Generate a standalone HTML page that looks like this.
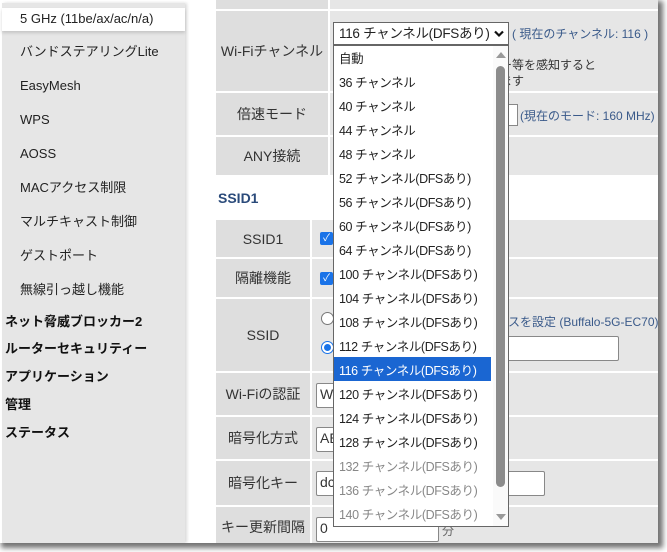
<!DOCTYPE html>
<html><head><meta charset="utf-8"><style>
*{margin:0;padding:0;box-sizing:border-box}
body{width:667px;height:552px;background:#fff;position:relative;overflow:hidden;font-family:"Liberation Sans","Noto Sans CJK JP",sans-serif;font-size:13px;color:#333}
.a{position:absolute}
#frame{left:0;top:0;width:658px;height:543px;background:#fff;box-shadow:3px 3px 5px 2px rgba(0,0,0,.55);overflow:hidden}
#side{left:2px;top:3px;width:183px;height:540px;background:#e6e6e6;box-shadow:2px 0 3px rgba(0,0,0,.15)}
.si{position:absolute;left:18px;font-size:13px;line-height:20px;color:#222;white-space:nowrap}
.sb{position:absolute;left:3px;font-size:13px;line-height:20px;font-weight:bold;color:#111;white-space:nowrap}
.l{position:absolute;background:#dedede;display:flex;align-items:center;justify-content:center;font-size:14px;color:#333}
.v{position:absolute;background:#e6e6e6}
.opt{position:absolute;left:1px;width:156px;height:24px;line-height:24px;padding-left:4px;font-size:12.5px;letter-spacing:-0.4px;color:#222;white-space:nowrap}
.cb{position:absolute;width:13px;height:13px;background:#1a73e8;border-radius:2px;color:#fff;font-size:10px;line-height:13px;text-align:center}
.inp{position:absolute;background:#fff;border:1px solid #888;border-radius:2px;font-size:14px;padding-left:3px;line-height:21px}
</style></head><body>
<div id="frame" class="a">
<div id="side" class="a">
 <div class="a" style="left:0;top:5px;width:183px;height:23px;background:#fff;box-shadow:0 2px 3px rgba(0,0,0,.15)"></div>
 <div class="si" style="top:6px">5 GHz (11be/ax/ac/n/a)</div>
 <div class="si" style="top:39px">バンドステアリングLite</div>
 <div class="si" style="top:73px">EasyMesh</div>
 <div class="si" style="top:107px">WPS</div>
 <div class="si" style="top:141px">AOSS</div>
 <div class="si" style="top:175px">MACアクセス制限</div>
 <div class="si" style="top:209px">マルチキャスト制御</div>
 <div class="si" style="top:243px">ゲストポート</div>
 <div class="si" style="top:277px">無線引っ越し機能</div>
 <div class="sb" style="top:309px">ネット脅威ブロッカー2</div>
 <div class="sb" style="top:336px">ルーターセキュリティー</div>
 <div class="sb" style="top:364px">アプリケーション</div>
 <div class="sb" style="top:392px">管理</div>
 <div class="sb" style="top:420px">ステータス</div>
</div>

<div class="l" style="left:216px;top:0;width:112px;height:9px"></div>
<div class="v" style="left:330px;top:0;width:330px;height:9px"></div>
<div class="l" style="left:216px;top:11px;width:112px;height:80px">Wi-Fiチャンネル</div>
<div class="v" style="left:330px;top:11px;width:330px;height:80px"></div>
<div class="l" style="left:216px;top:93px;width:112px;height:42px">倍速モード</div>
<div class="v" style="left:330px;top:93px;width:330px;height:42px"></div>
<div class="l" style="left:216px;top:137px;width:112px;height:38px">ANY接続</div>
<div class="v" style="left:330px;top:137px;width:330px;height:38px"></div>

<div class="a" style="left:512px;top:25px;font-size:12px;color:#3a5a8a">( 現在のチャンネル:  116 )</div>
<div class="a" style="left:500px;top:56px;font-size:12px;color:#333">ー等を感知すると</div>
<div class="a" style="left:500px;top:72px;font-size:12px;color:#333">ます</div>
<div class="a" style="left:498px;top:104px;width:20px;height:22px;background:#fff;border:1px solid #888;border-left:none;font-size:10px;line-height:20px">✔</div>
<div class="a" style="left:520px;top:107px;font-size:12px;color:#3a5a8a">(現在のモード: 160 MHz)</div>

<div class="a" style="left:218px;top:190px;font-size:14px;font-weight:bold;color:#2a4a7a">SSID1</div>

<div class="l" style="left:216px;top:220px;width:94px;height:37px">SSID1</div>
<div class="v" style="left:312px;top:220px;width:348px;height:37px"></div>
<div class="l" style="left:216px;top:259px;width:94px;height:38px">隔離機能</div>
<div class="v" style="left:312px;top:259px;width:348px;height:38px"></div>
<div class="l" style="left:216px;top:299px;width:94px;height:72px">SSID</div>
<div class="v" style="left:312px;top:299px;width:348px;height:72px"></div>
<div class="l" style="left:216px;top:373px;width:94px;height:42px">Wi-Fiの認証</div>
<div class="v" style="left:312px;top:373px;width:348px;height:42px"></div>
<div class="l" style="left:216px;top:417px;width:94px;height:42px">暗号化方式</div>
<div class="v" style="left:312px;top:417px;width:348px;height:42px"></div>
<div class="l" style="left:216px;top:461px;width:94px;height:44px">暗号化キー</div>
<div class="v" style="left:312px;top:461px;width:348px;height:44px"></div>
<div class="l" style="left:216px;top:507px;width:94px;height:40px">キー更新間隔</div>
<div class="v" style="left:312px;top:507px;width:348px;height:40px"></div>

<div class="cb" style="left:320px;top:232px">✓</div>
<div class="cb" style="left:320px;top:272px">✓</div>
<div class="a" style="left:321px;top:312px;width:13px;height:13px;border:1px solid #777;border-radius:50%;background:#fff"></div>
<div class="a" style="left:321px;top:341px;width:13px;height:13px;border:1px solid #1a73e8;border-radius:50%;background:#fff"><div class="a" style="left:2px;top:2px;width:7px;height:7px;border-radius:50%;background:#1a73e8"></div></div>
<div class="a" style="left:508px;top:313px;font-size:12px;color:#3a5a8a;white-space:nowrap">スを設定 (Buffalo-5G-EC70)</div>
<div class="inp" style="left:505px;top:336px;width:114px;height:25px"></div>
<div class="inp" style="left:316px;top:383px;width:30px;height:25px">W</div>
<div class="inp" style="left:316px;top:427px;width:30px;height:25px">AE</div>
<div class="inp" style="left:316px;top:471px;width:229px;height:25px">dc</div>
<div class="inp" style="left:316px;top:517px;width:123px;height:25px">0</div>
<div class="a" style="left:442px;top:522px;font-size:12px;color:#666">分</div>

<!-- select -->
<div class="a" style="left:333px;top:22px;width:176px;height:23px;background:#fff;border:1px solid #666;font-size:13.5px;letter-spacing:-0.3px;line-height:21px;padding-left:5px;white-space:nowrap;color:#222">116 チャンネル(DFSあり)
 <svg class="a" style="left:160px;top:7px" width="10" height="8" viewBox="0 0 10 8"><path d="M1 1.5 L5 5.5 L9 1.5" stroke="#111" stroke-width="2.2" fill="none"/></svg></div>
<div class="a" style="left:333px;top:45px;width:176px;height:482px;background:#fff;border:1px solid #666;overflow:hidden">
 <div class="a" style="left:0;top:311px;width:157px;height:24px;background:#1a66d2"></div>
 <div class="opt" style="top:1px">自動</div>
 <div class="opt" style="top:25px">36 チャンネル</div>
 <div class="opt" style="top:49px">40 チャンネル</div>
 <div class="opt" style="top:73px">44 チャンネル</div>
 <div class="opt" style="top:97px">48 チャンネル</div>
 <div class="opt" style="top:121px">52 チャンネル(DFSあり)</div>
 <div class="opt" style="top:145px">56 チャンネル(DFSあり)</div>
 <div class="opt" style="top:169px">60 チャンネル(DFSあり)</div>
 <div class="opt" style="top:193px">64 チャンネル(DFSあり)</div>
 <div class="opt" style="top:217px">100 チャンネル(DFSあり)</div>
 <div class="opt" style="top:241px">104 チャンネル(DFSあり)</div>
 <div class="opt" style="top:265px">108 チャンネル(DFSあり)</div>
 <div class="opt" style="top:289px">112 チャンネル(DFSあり)</div>
 <div class="opt" style="top:313px;color:#fff">116 チャンネル(DFSあり)</div>
 <div class="opt" style="top:337px">120 チャンネル(DFSあり)</div>
 <div class="opt" style="top:361px">124 チャンネル(DFSあり)</div>
 <div class="opt" style="top:385px">128 チャンネル(DFSあり)</div>
 <div class="opt" style="top:409px;color:#888">132 チャンネル(DFSあり)</div>
 <div class="opt" style="top:433px;color:#888">136 チャンネル(DFSあり)</div>
 <div class="opt" style="top:457px;color:#888">140 チャンネル(DFSあり)</div>
 <div class="a" style="left:159px;top:0;width:16px;height:482px;background:#fafafa"></div>
 <div class="a" style="left:162px;top:20px;width:9px;height:421px;background:#8c8c8c;border-radius:5px"></div>
 <div class="a" style="left:162px;top:6px;width:0;height:0;border-left:5px solid transparent;border-right:5px solid transparent;border-bottom:6px solid #999"></div>
 <div class="a" style="left:162px;top:468px;width:0;height:0;border-left:5px solid transparent;border-right:5px solid transparent;border-top:6px solid #999"></div>
</div>
</div>
</body></html>
